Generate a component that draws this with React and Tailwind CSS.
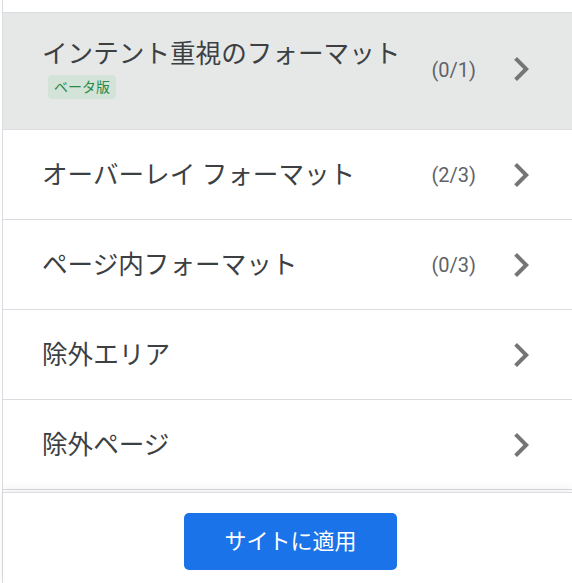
import React from "react";

function Chevron() {
  return (
    <svg width="48" height="48" viewBox="0 0 24 24" className="shrink-0">
      <path d="M10 6L8.59 7.41 13.17 12l-4.58 4.59L10 18l6-6z" fill="#757575" />
    </svg>
  );
}

function Row({ title, count, badge, active }) {
  if (badge) {
    return (
      <div className={`flex items-center pl-[39px] pr-[27px] pt-[25px] pb-[30px] border-b border-[#dadce0] ${active ? "bg-[#e6e8e8]" : ""}`}>
        <div className="flex-1 flex flex-col items-start">
          <div className="text-[25.6px] leading-[32px] text-[#3c4043]">{title}</div>
          <div className="mt-[5px] ml-[6px] h-[24px] px-[6px] flex items-center rounded-[4px] bg-[#d3e3d8] text-[14px] text-[#2b8a47]">
            {badge}
          </div>
        </div>
        {count && <div className="text-[20px] text-[#5f6368] mr-[21px] mt-[2px]">{count}</div>}
        <Chevron />
      </div>
    );
  }
  return (
    <div className="flex items-center h-[90px] shrink-0 pl-[39px] pr-[27px] border-b border-[#dadce0]">
      <div className="flex-1 text-[25.6px] leading-[32px] text-[#3c4043]">{title}</div>
      {count && <div className="text-[20px] text-[#5f6368] mr-[21px]">{count}</div>}
      <Chevron />
    </div>
  );
}

export default function App() {
  return (
    <div
      className="w-[572px] h-[583px] overflow-hidden bg-white pl-[2px]"
      style={{ fontFamily: 'Roboto, "Noto Sans CJK JP", sans-serif' }}
    >
      <div className="h-full border-l border-[#dadce0] flex flex-col">
        <div className="h-[13px] shrink-0 border-b border-[#dadce0]" />
        <div className="flex-1 overflow-hidden flex flex-col">
          <Row title="インテント重視のフォーマット" count="(0/1)" badge="ベータ版" active />
          <Row title="オーバーレイ フォーマット" count="(2/3)" />
          <Row title="ページ内フォーマット" count="(0/3)" />
          <Row title="除外エリア" />
          <Row title="除外ページ" />
        </div>
        <div className="h-[91px] shrink-0 border-t border-[#dadce0] shadow-[0_-4px_10px_rgba(0,0,0,0.06)] relative z-10 bg-white flex justify-center pt-[20px] pl-[6px]">
          <button className="w-[213px] h-[57px] rounded-[5px] bg-[#1a73e8] text-white text-[22px]">
            サイトに適用
          </button>
        </div>
      </div>
    </div>
  );
}
